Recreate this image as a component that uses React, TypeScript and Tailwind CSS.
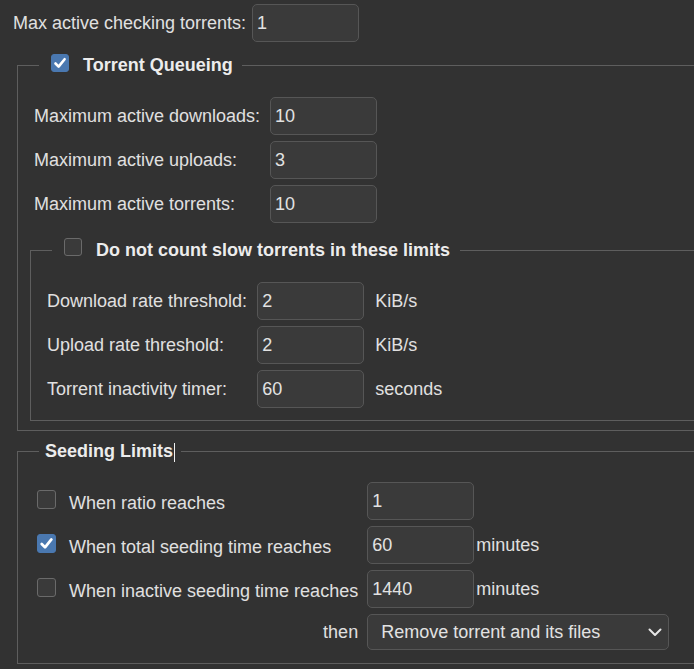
import React from "react";

function Box({ checked, size = 18, className = "" }: { checked?: boolean; size?: number; className?: string }) {
  return (
    <span
      className={
        "inline-flex shrink-0 items-center justify-center rounded-[3px] border " +
        (checked ? "bg-[#4a78b0] border-[#4a78b0] " : "bg-[#3a3a3a] border-[#6a6a6a] ") +
        className
      }
      style={{ width: size, height: size }}
    >
      {checked && (
        <svg width={size - 2} height={size - 2} viewBox="0 0 16 16">
          <path d="M3.5 8.5 L6.6 11.6 L12.6 4.2" fill="none" stroke="#ffffff" strokeWidth="2.6" strokeLinecap="round" strokeLinejoin="round" />
        </svg>
      )}
    </span>
  );
}

function Field({ value }: { value: string }) {
  return (
    <input
      readOnly
      value={value}
      className="w-[107px] h-[38px] rounded-[5px] border border-[#565656] bg-[#3a3a3a] pl-[4px] text-[#e2e2e2] outline-none"
    />
  );
}

export default function App() {
  return (
    <div className="w-[694px] h-[669px] overflow-hidden bg-[#323232] text-[#e0e0e0] text-[18px] leading-[20px] font-['Liberation_Sans',Arial,sans-serif]">
      <div className="w-[780px]">
        <div className="flex items-center gap-[6px] pt-[4px] pl-[13px]">
          <span>Max active checking torrents:</span>
          <Field value="1" />
        </div>

        <fieldset className="ml-[17px] mt-[13px] border border-[#5e5e5e] pb-[9px]">
          <legend className="ml-[21px] pl-[12px] pr-[9px]">
            <div className="flex h-[20px] items-center gap-[14px]">
              <Box checked className="-translate-y-[2px]" />
              <span className="font-bold text-[#ececec]">Torrent Queueing</span>
            </div>
          </legend>
          <div className="pl-[16px] pt-[22px]">
            <div className="grid grid-cols-[auto_107px] items-center gap-x-[10px] gap-y-[6px] justify-start">
              <span>Maximum active downloads:</span>
              <Field value="10" />
              <span>Maximum active uploads:</span>
              <Field value="3" />
              <span>Maximum active torrents:</span>
              <Field value="10" />
            </div>
          </div>

          <fieldset className="ml-[12px] mt-[17px] border border-[#5e5e5e] pb-[12px]">
            <legend className="ml-[21px] pl-[12px] pr-[10px]">
              <div className="flex h-[20px] items-center gap-[14px]">
                <Box size={18} className="-translate-y-[3px]" />
                <span className="font-bold text-[#ececec]">Do not count slow torrents in these limits</span>
              </div>
            </legend>
            <div className="pl-[16px] pt-[22px]">
              <div className="grid grid-cols-[auto_107px_auto] items-center gap-x-[10px] gap-y-[6px] justify-start">
                <span>Download rate threshold:</span>
                <Field value="2" />
                <span className="pl-[1px]">KiB/s</span>
                <span>Upload rate threshold:</span>
                <Field value="2" />
                <span className="pl-[1px]">KiB/s</span>
                <span>Torrent inactivity timer:</span>
                <Field value="60" />
                <span className="pl-[1px]">seconds</span>
              </div>
            </div>
          </fieldset>
        </fieldset>

        <fieldset className="ml-[17px] mt-[10px] border border-[#5e5e5e] pb-[13px]">
          <legend className="ml-[21px] pl-[6px] pr-[6px]">
            <div className="flex h-[20px] items-center">
              <span className="font-bold text-[#ececec]">Seeding Limits</span>
              <span className="ml-[1px] h-[19px] w-[1px] bg-[#f0f0f0] translate-y-[1px]" />
            </div>
          </legend>
          <div className="pl-[19px] pt-[21px]">
            <div className="grid grid-cols-[19px_auto_107px_auto] items-center gap-y-[6px] justify-start">
              <Box size={19} className="-translate-y-[2px]" />
              <span className="pl-[13px] pr-[9px] translate-y-[2px]">When ratio reaches</span>
              <Field value="1" />
              <span />

              <Box size={19} checked className="-translate-y-[2px]" />
              <span className="pl-[13px] pr-[9px] translate-y-[2px]">When total seeding time reaches</span>
              <Field value="60" />
              <span className="pl-[2px]">minutes</span>

              <Box size={19} className="-translate-y-[2px]" />
              <span className="pl-[13px] pr-[9px] translate-y-[2px]">When inactive seeding time reaches</span>
              <Field value="1440" />
              <span className="pl-[2px]">minutes</span>

              <span />
              <span className="justify-self-end pr-[9px]">then</span>
              <div className="col-span-2 flex h-[36px] w-[302px] items-center justify-between rounded-[5px] border border-[#565656] bg-[#3a3a3a] pl-[13px] pr-[6px] text-[#e2e2e2]">
                <span>Remove torrent and its files</span>
                <svg width="14" height="9" viewBox="0 0 14 9">
                  <polyline points="1.5,1.5 7,7 12.5,1.5" fill="none" stroke="#e6e6e6" strokeWidth="2" strokeLinecap="round" strokeLinejoin="round" />
                </svg>
              </div>
            </div>
          </div>
        </fieldset>
      </div>
    </div>
  );
}
